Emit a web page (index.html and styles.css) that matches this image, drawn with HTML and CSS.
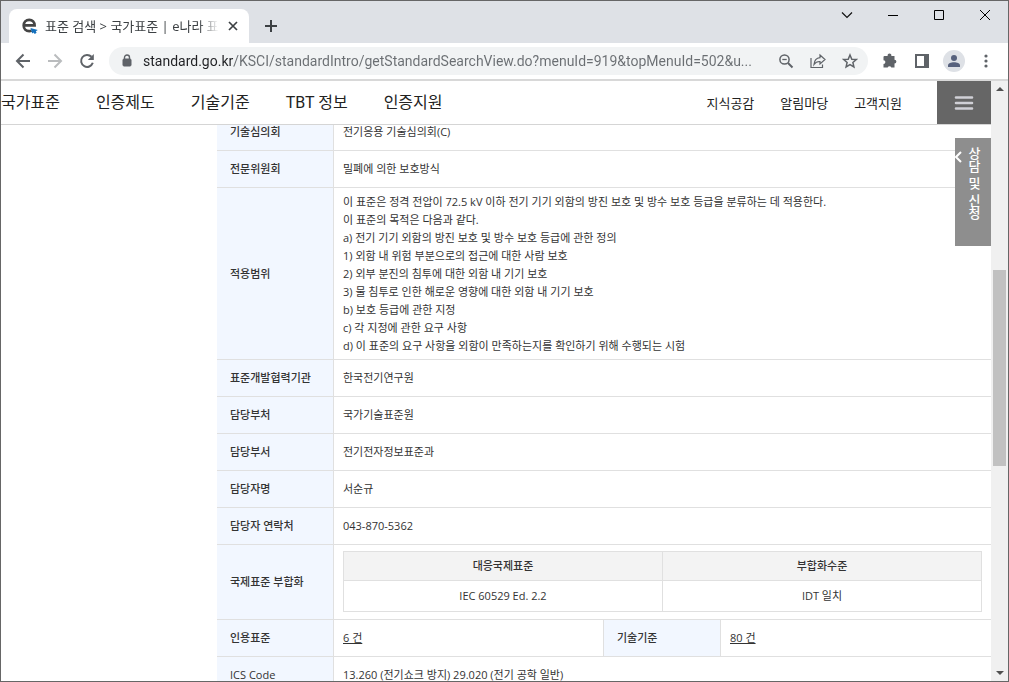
FILE: index.html
```html
<!DOCTYPE html>
<html lang="ko">
<head>
<meta charset="utf-8">
<title>표준 검색 &gt; 국가표준 | e나라 표준인증</title>
<link rel="stylesheet" href="styles.css">
</head>
<body>
<div class="window">
  <div class="titlebar">
    <div class="tab">
      <svg class="favicon" width="16" height="16" viewBox="0 0 16 16" fill="none"><path d="M2.200 7.400H12.600C12.600 4 10.500 1.800 7.200 1.800C4 1.800 1.700 4.200 1.700 7.500C1.700 10.900 4 13.200 7.200 13.200C8.200 13.200 9 13 9.500 12.700" stroke="#454545" stroke-width="2.700"/><path d="M8.500 10L15.800 12L13.800 13.200L14.600 14.800L12.800 16L11.400 14.400L10.200 15.400Z" fill="#1470bd"/></svg>
      <span class="tab-title">표준 검색 &gt; 국가표준 | e나라 표</span>
      <button class="tab-close" type="button" aria-label="탭 닫기"><svg width="10" height="10" viewBox="0 0 10 10"><path d="M1 1L9 9M9 1L1 9" stroke="#3c4043" stroke-width="1.700"/></svg></button>
    </div>
    <button class="new-tab" type="button" aria-label="새 탭"><svg width="12" height="12" viewBox="0 0 12 12"><path d="M6 0V12M0 6H12" stroke="#3c4043" stroke-width="2"/></svg></button>
    <div class="window-buttons">
      <button type="button" aria-label="탭 검색"><svg width="12" height="12" viewBox="0 0 12 12" fill="none"><path d="M1 3.500L6 8.500L11 3.500" stroke="#111" stroke-width="1.200"/></svg></button>
      <button type="button" aria-label="최소화"><svg width="12" height="12" viewBox="0 0 12 12"><path d="M1 6.500H11" stroke="#000"/></svg></button>
      <button type="button" aria-label="최대화"><svg width="12" height="12" viewBox="0 0 12 12" fill="none"><path d="M1.500 1.500H10.500V10.500H1.500Z" stroke="#000"/></svg></button>
      <button type="button" aria-label="닫기"><svg width="12" height="12" viewBox="0 0 12 12"><path d="M1 1L11 11M11 1L1 11" stroke="#000"/></svg></button>
    </div>
  </div>

  <div class="toolbar">
    <button class="tool" type="button" aria-label="뒤로"><svg width="16" height="16" viewBox="0 0 16 16" fill="none" stroke="#5f6368" stroke-width="2"><path d="M15 8H2.500M8.500 1.500L2 8L8.500 14.500"/></svg></button>
    <button class="tool" type="button" aria-label="앞으로" disabled><svg width="16" height="16" viewBox="0 0 16 16" fill="none" stroke="#babcbe" stroke-width="2"><path d="M1 8H13.500M7.500 1.500L14 8L7.500 14.500"/></svg></button>
    <button class="tool" type="button" aria-label="새로고침"><svg width="16" height="16" viewBox="0 0 16 16"><path d="M12.500 3.800A6 6 0 1 0 13.800 9.800" fill="none" stroke="#5f6368" stroke-width="2"/><path d="M14.800 1V7H8.800Z" fill="#5f6368"/></svg></button>
    <form class="omnibox">
      <svg class="lock" width="10" height="14" viewBox="0 0 10 14"><path d="M2.500 6V3.500A2.500 2.500 0 0 1 7.500 3.500V6" fill="none" stroke="#5f6368" stroke-width="1.400"/><rect x="1" y="5" width="8" height="7" rx="1" fill="#5f6368" stroke="#5f6368"/></svg>
      <input class="url" type="text" aria-label="주소창" value="standard.go.kr/KSCI/standardIntro/getStandardSearchView.do?menuId=919&amp;topMenuId=502&amp;u...">
      <button class="tool" type="button" aria-label="축소"><svg width="16" height="16" viewBox="0 0 16 16" fill="none" stroke="#5f6368"><circle cx="6.500" cy="6.500" r="4.600" stroke-width="1.500"/><path d="M10 10L14.500 14.500" stroke-width="1.900"/><path d="M4.300 6.500H8.700" stroke-width="1.300"/></svg></button>
      <button class="tool" type="button" aria-label="공유"><svg width="16" height="16" viewBox="0 0 16 16" fill="none" stroke="#5f6368" stroke-width="1.200"><path d="M1 5V14.500H12.500V11.500"/><path d="M10 2L15 6.500L10 11V8.500C7 8.300 5.500 9.300 4 11.500C4.300 7.500 6.300 5 10 4.600Z"/></svg></button>
      <button class="tool" type="button" aria-label="북마크"><svg width="16" height="16" viewBox="0 0 16 16" fill="none"><path d="M8 2L9.800 6.200L14.300 6.500L10.900 9.500L11.900 13.900L8 11.600L4.100 13.900L5.100 9.500L1.700 6.500L6.200 6.200Z" stroke="#5f6368" stroke-width="1.500"/></svg></button>
    </form>
    <button class="tool" type="button" aria-label="확장 프로그램"><svg width="16" height="16" viewBox="0 0 16 16"><path d="M2.500 3H5.700A1.900 1.900 0 1 1 9.300 3H12.500V6.700A1.900 1.900 0 1 1 12.500 10.500V14.500H9.300A1.900 1.900 0 0 0 5.700 14.500H1.500V11A1.900 1.900 0 0 0 1.500 7.200V4Q1.500 3 2.500 3Z" fill="#5f6368"/></svg></button>
    <button class="tool" type="button" aria-label="측면 패널"><svg width="14" height="14" viewBox="0 0 14 14"><path d="M0 0H14V14H0ZM2 2V12H9V2Z" fill="#5f6368" fill-rule="evenodd"/></svg></button>
    <button class="tool" type="button" aria-label="프로필"><svg width="22" height="22" viewBox="0 0 22 22"><circle cx="11" cy="11" r="11" fill="#dee1e6"/><circle cx="11" cy="8" r="3" fill="#57617d"/><path d="M5 17V15.500C5 13.300 8 12.300 11 12.300S17 13.300 17 15.500V17Z" fill="#57617d"/></svg></button>
    <button class="tool" type="button" aria-label="메뉴"><svg width="4" height="14" viewBox="0 0 4 14" fill="#5f6368"><circle cx="2" cy="2" r="1.600"/><circle cx="2" cy="7" r="1.600"/><circle cx="2" cy="12" r="1.600"/></svg></button>
  </div>

  <div class="viewport">
    <div class="page">
      <header class="site-header">
        <nav class="main-nav">
          <a href="#">국가표준</a>
          <a href="#">인증제도</a>
          <a href="#">기술기준</a>
          <a href="#">TBT 정보</a>
          <a href="#">인증지원</a>
        </nav>
        <nav class="sub-nav">
          <a href="#">지식공감</a>
          <a href="#">알림마당</a>
          <a href="#">고객지원</a>
        </nav>
        <button class="all-menu" type="button" aria-label="전체메뉴"><svg width="20" height="14" viewBox="0 0 20 14" stroke="#d0d0d6" stroke-width="2.600" stroke-linecap="round"><path d="M2 1.500H18M2 7H18M2 12.500H18"/></svg></button>
      </header>

      <main class="content">
        <table class="detail">
          <colgroup><col class="col-label"><col class="col-value"><col class="col-label"><col class="col-value"></colgroup>
          <tbody>
          <tr><th scope="row">기술심의회</th><td colspan="3">전기응용 기술심의회(C)</td></tr>
          <tr><th scope="row">전문위원회</th><td colspan="3">밀폐에 의한 보호방식</td></tr>
          <tr><th scope="row">적용범위</th><td colspan="3" class="scope">이 표준은 정격 전압이 72.5 kV 이하 전기 기기 외함의 방진 보호 및 방수 보호 등급을 분류하는 데 적용한다.<br>이 표준의 목적은 다음과 같다.<br>a) 전기 기기 외함의 방진 보호 및 방수 보호 등급에 관한 정의<br>1) 외함 내 위험 부분으로의 접근에 대한 사람 보호<br>2) 외부 분진의 침투에 대한 외함 내 기기 보호<br>3) 물 침투로 인한 해로운 영향에 대한 외함 내 기기 보호<br>b) 보호 등급에 관한 지정<br>c) 각 지정에 관한 요구 사항<br>d) 이 표준의 요구 사항을 외함이 만족하는지를 확인하기 위해 수행되는 시험</td></tr>
          <tr><th scope="row">표준개발협력기관</th><td colspan="3">한국전기연구원</td></tr>
          <tr><th scope="row">담당부처</th><td colspan="3">국가기술표준원</td></tr>
          <tr><th scope="row">담당부서</th><td colspan="3">전기전자정보표준과</td></tr>
          <tr><th scope="row">담당자명</th><td colspan="3">서순규</td></tr>
          <tr><th scope="row">담당자 연락처</th><td colspan="3">043-870-5362</td></tr>
          <tr><th scope="row">국제표준 부합화</th><td colspan="3" class="nested">
            <table class="match">
              <thead><tr><th scope="col">대응국제표준</th><th scope="col">부합화수준</th></tr></thead>
              <tbody><tr><td>IEC 60529 Ed. 2.2</td><td>IDT 일치</td></tr></tbody>
            </table>
          </td></tr>
          <tr><th scope="row">인용표준</th><td class="split"><a href="#">6 건</a></td><th scope="row">기술기준</th><td><a href="#">80 건</a></td></tr>
          <tr><th scope="row">ICS Code</th><td colspan="3">13.260 (전기쇼크 방지) 29.020 (전기 공학 일반)</td></tr>
          </tbody>
        </table>
      </main>

      <button class="consult" type="button"><svg width="7" height="12" viewBox="0 0 7 12" fill="none"><path d="M6 1L1 6L6 11" stroke="#fff" stroke-width="2"/></svg><span>상담 및 신청</span></button>
    </div>

    <div class="scrollbar">
      <svg width="8" height="4" viewBox="0 0 8 4"><path d="M0 4L4 0L8 4Z" fill="#505050"/></svg>
      <div class="track"><div class="thumb"></div></div>
      <svg width="8" height="4" viewBox="0 0 8 4"><path d="M0 0L4 4L8 0Z" fill="#505050"/></svg>
    </div>
  </div>
</div>
</body>
</html>
```
FILE: styles.css
```css
* { box-sizing: border-box; }

body {
  margin: 0;
  font-family: "Open Sans", "Noto Sans CJK KR", sans-serif;
  font-size: 11px;
  line-height: 18px;
  color: #333;
}

a { color: inherit; text-decoration: none; }

button {
  display: flex;
  align-items: center;
  justify-content: center;
  flex: none;
  margin: 0;
  padding: 0;
  border: 0;
  background: none;
  font: inherit;
}

.window {
  display: flex;
  flex-direction: column;
  height: 100vh;
  overflow: hidden;
  border: 1px solid #666;
  background: #fff;
}

/* Tab strip */
.titlebar {
  display: flex;
  flex: none;
  height: 42px;
  padding-left: 8px;
  background: #dee1e6;
}

.tab {
  display: flex;
  align-items: center;
  width: 240px;
  margin-top: 8px;
  padding: 0 11px 0 13px;
  border-radius: 8px 8px 0 0;
  background: #fff;
}

.favicon { flex: none; margin-right: 7px; }

.tab-title {
  flex: 1;
  overflow: hidden;
  white-space: nowrap;
  font-size: 13px;
  color: #3c4043;
  -webkit-mask-image: linear-gradient(to right, #000 calc(100% - 20px), transparent);
  mask-image: linear-gradient(to right, #000 calc(100% - 20px), transparent);
}

.tab-close { width: 10px; margin-left: 9px; }

.new-tab { width: 44px; padding-top: 8px; }

.window-buttons {
  display: flex;
  height: 28px;
  margin-left: auto;
}

.window-buttons button { width: 46px; }

/* Navigation toolbar */
.toolbar {
  display: flex;
  align-items: center;
  flex: none;
  height: 38px;
  padding: 0 6px;
  border-bottom: 2px solid #d8d8d8;
}

.tool { width: 32px; height: 28px; }

.omnibox {
  display: flex;
  flex: 1;
  align-items: center;
  min-width: 0;
  height: 28px;
  margin: 0 6px;
  padding: 0 2px 0 13px;
  border-radius: 14px;
  background: #f1f3f4;
}

.lock { flex: none; margin-right: 11px; }

.url {
  flex: 1;
  min-width: 0;
  height: 28px;
  padding: 0;
  border: 0;
  outline: 0;
  font: 14px Roboto, "Open Sans", sans-serif;
  color: transparent;
  background: linear-gradient(to right, #202124 91px, #6a6e72 91px);
  -webkit-background-clip: text;
  background-clip: text;
}

/* Page area */
.viewport {
  display: flex;
  flex: 1;
  min-height: 0;
}

.page {
  position: relative;
  display: flex;
  flex: 1;
  flex-direction: column;
  min-width: 0;
}

.site-header {
  display: flex;
  flex: none;
  align-items: center;
  height: 44px;
  border-bottom: 1px solid #d5d5d5;
  color: #222;
}

.main-nav {
  display: flex;
  gap: 36px;
  font-family: Roboto, "Noto Sans CJK KR", sans-serif;
  font-size: 16px;
}

.sub-nav {
  display: flex;
  gap: 26px;
  margin: 0 35px 0 auto;
  font-size: 13px;
}

.all-menu {
  align-self: stretch;
  width: 54px;
  background: #666;
}

.content {
  flex: 1;
  min-height: 0;
  overflow: hidden;
  padding-left: 216px;
}

.detail {
  width: 100%;
  margin-top: -11px;
  border-spacing: 0;
  table-layout: fixed;
}

.col-label { width: 117px; }

.detail th,
.detail td {
  height: 37px;
  padding: 0 9px;
  border-bottom: 1px solid #e0e0e0;
  text-align: left;
}

.detail th {
  padding: 0 0 0 13px;
  border-right: 1px solid #e0e0e0;
  background: #f2f7ff;
  font-weight: 500;
  white-space: nowrap;
}

.detail td.scope { height: 172px; }
.detail td.split { border-right: 1px solid #e0e0e0; }
.detail td.nested { padding: 6px 9px 7px; }
.detail td a { text-decoration: underline; }

.match {
  width: 100%;
  border-collapse: collapse;
  table-layout: fixed;
}

.detail .match th,
.detail .match td {
  height: 31px;
  padding: 0;
  border: 1px solid #e0e0e0;
  text-align: center;
}

.detail .match th {
  height: 29px;
  background: #f3f3f3;
}

.consult {
  position: absolute;
  top: 57px;
  right: 0;
  align-items: flex-start;
  justify-content: flex-start;
  width: 36px;
  height: 108px;
  padding-top: 9px;
  background: #8e8e8e;
  color: #fff;
  font-family: "Noto Sans CJK KR", sans-serif;
  font-size: 13px;
  font-weight: 500;
  line-height: 14px;
}

.consult svg { margin: 4px 5px 0 0; }

.consult span {
  white-space: nowrap;
  writing-mode: vertical-rl;
}

.scrollbar {
  display: flex;
  flex: none;
  flex-direction: column;
  align-items: center;
  width: 17px;
  padding: 6px 1px;
  background: #f0f0f0;
}

.track {
  flex: 1;
  width: 13px;
  padding-top: 179px;
}

.thumb { height: 49%; min-height: 20px; background: #c1c1c1; }
```
